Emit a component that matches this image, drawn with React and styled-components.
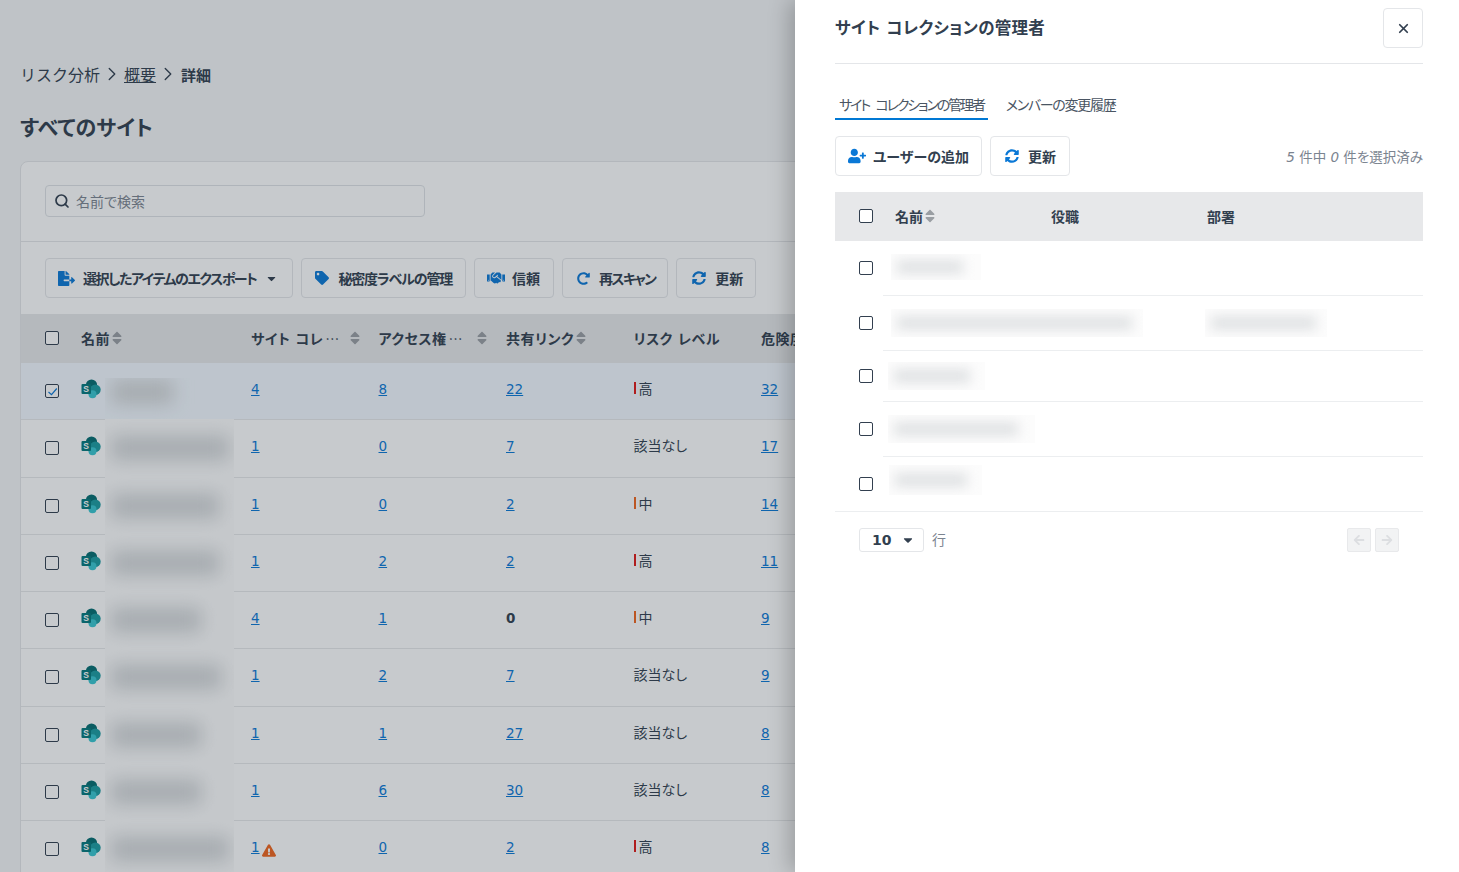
import React from "react";
import styled, { createGlobalStyle } from "styled-components";
import {
  FaArrowLeft, FaArrowRight, FaCaretDown, FaExclamationTriangle, FaFileExport, FaHandshake,
  FaRedoAlt, FaSort, FaSyncAlt, FaTag, FaUserPlus,
} from "react-icons/fa";
import { ChevronRight, Search, X } from "lucide-react";

const Global = createGlobalStyle`
  html, body { margin: 0; padding: 0; height: 100%; overflow: hidden; }
  body {
    font-family: "DejaVu Sans", "Noto Sans CJK JP", sans-serif;
    font-size: 14px;
    color: #323f4f;
    font-feature-settings: "palt";
  }
  * { box-sizing: border-box; }
`;

const Screen = styled.div`
  position: relative;
  height: 872px;
  overflow: hidden;
  background: #f5f6f7;
`;
const Page = styled.main`
  display: flex;
  flex-direction: column;
  padding: 63px 0 0 20px;
`;
const Crumbs = styled.nav`
  display: flex;
  align-items: center;
  height: 22px;
  font-size: 16px;
  gap: 1px;
  font-feature-settings: normal;
`;
const CrumbLink = styled.a`
  text-decoration: underline;
  color: inherit;
`;
const CrumbNow = styled.b`
  font-size: 15px;
  font-weight: 700;
  margin-left: 1px;
`;
const Title = styled.h1`
  margin: 28px 0 0;
  font-size: 21px;
  line-height: 30px;
  font-weight: 700;
`;
const Card = styled.section`
  margin-top: 18px;
  background: #fff;
  border: 1px solid #e4e6e9;
  border-radius: 8px 0 0 0;
`;
const SearchBar = styled.div`
  padding: 23px 24px 24px;
  border-bottom: 1px solid #e4e6e9;
`;
const SearchBox = styled.div`
  width: 380px;
  height: 32px;
  display: flex;
  align-items: center;
  gap: 6px;
  padding: 0 8px;
  border: 1px solid #dfe2e6;
  border-radius: 4px;
  color: #7d8590;
  svg { color: #323f4f; }
`;
const Toolbar = styled.div`
  display: flex;
  gap: 8px;
  padding: 16px 24px;
`;
const Button = styled.button`
  height: 40px;
  padding: 0 ${(p) => p.$pr || 13}px 0 ${(p) => p.$pl || 13}px;
  display: inline-flex;
  align-items: center;
  gap: ${(p) => p.$gap || 8}px;
  background: #fff;
  border: 1px solid #e4e6e9;
  border-radius: 4px;
  color: #323f4f;
  font: inherit;
  font-weight: 700;
  font-size: 14px;
  font-feature-settings: "palt";
  white-space: nowrap;
  svg { color: #0a78d6; flex: none; }
`;
const Squeezed = styled.span`
  letter-spacing: ${(p) => p.$ls}px;
`;
const Caret = styled(FaCaretDown)`
  && { color: #323f4f; margin-left: 1px; }
`;
const HeadRow = styled.div`
  display: grid;
  grid-template-columns: 60px 170px repeat(6, 127.5px);
  height: 49px;
  padding-bottom: 2px;
  align-items: center;
  background: #e7e8ea;
  font-weight: 700;
  letter-spacing: 0.5px;
`;
const Row = styled.div`
  display: grid;
  grid-template-columns: 60px 170px repeat(6, 127.5px);
  height: 57.25px;
  align-items: center;
  border-bottom: 1px solid #e7e8ea;
  background: ${(p) => (p.$selected ? "#f3f9ff" : "#fff")};
`;
const CheckCell = styled.div`
  display: flex;
  padding-left: 24px;
`;
const Box = styled.span`
  width: 14px;
  height: 14px;
  flex: none;
  display: flex;
  align-items: center;
  justify-content: center;
  border: 1.5px solid #323f4f;
  border-radius: 2px;
  background: #fff;
`;
const HeadLabel = styled.div`
  display: flex;
  align-items: center;
  gap: 2px;
  white-space: nowrap;
`;
const Dots = styled.span`
  font-family: "Noto Sans CJK JP", sans-serif;
  font-weight: 400;
`;
const SortIcon = styled(FaSort)`
  color: #9a9ea3;
  width: 10px;
  height: 16px;
  flex: none;
  margin-left: ${(p) => p.$ml || 0}px;
`;
const NameCell = styled.div`
  position: relative;
  align-self: stretch;
  display: flex;
  align-items: center;
  padding-bottom: 4px;
`;
const Smudge = styled.div`
  position: absolute;
  top: ${(p) => (p.$first ? 15 : -1)}px;
  bottom: -1px;
  left: 24px;
  width: 129px;
  overflow: hidden;
  display: flex;
  align-items: center;
  padding-bottom: ${(p) => (p.$first ? 14 : 0)}px;
  background: ${(p) => (p.$first ? "transparent" : "#fdfdfd")};
`;
const SmudgeBar = styled.div`
  width: ${(p) => p.$w}px;
  height: 24px;
  margin-left: 6px;
  background: #d3d6d8;
  filter: blur(9px);
`;
const Cell = styled.div`
  display: flex;
  align-items: center;
  gap: 2px;
  padding-bottom: 4px;
`;
const Link = styled.a`
  color: #0a78d6;
  font-size: 13.5px;
  text-decoration: underline;
`;
const Plain = styled.b`
  font-weight: 700;
  font-size: 13.5px;
`;
const Risk = styled.span`
  display: inline-block;
  width: 2px;
  height: 12px;
  margin-right: 3px;
  background: ${(p) => p.$c};
`;
const RiskText = styled.span`
  font-size: 14px;
  margin-bottom: 2px;
`;
const Warn = styled(FaExclamationTriangle)`
  color: #f0651c;
  width: 14px;
  height: 13px;
  transform: translateY(3px);
`;
const Backdrop = styled.div`
  position: absolute;
  inset: 0;
  background: rgba(33, 43, 54, 0.25);
`;
const Drawer = styled.aside`
  position: absolute;
  top: 0;
  right: 0;
  bottom: 0;
  width: 664px;
  padding: 8px 36px 0 40px;
  background: #fff;
  box-shadow: -6px 0 20px rgba(0, 0, 0, 0.22);
`;
const DrawerHead = styled.header`
  display: flex;
  justify-content: space-between;
  height: 56px;
  border-bottom: 1px solid #e4e6e9;
`;
const DrawerTitle = styled.h2`
  margin: 9px 0 0;
  font-size: 16.5px;
  line-height: 24px;
  font-weight: 700;
  letter-spacing: 0.3px;
`;
const Close = styled.button`
  width: 40px;
  height: 40px;
  display: flex;
  align-items: center;
  justify-content: center;
  background: #fff;
  border: 1px solid #e4e6e9;
  border-radius: 4px;
  color: #323f4f;
`;
const Tabs = styled.div`
  display: flex;
  gap: 14px;
  margin-top: 30px;
`;
const Tab = styled.div`
  height: 26px;
  padding: 0 4px;
  font-size: 14px;
  line-height: 22px;
  letter-spacing: ${(p) => p.$ls}px;
  word-spacing: 4px;
  white-space: nowrap;
  color: #4a5563;
  border-bottom: 2px solid ${(p) => (p.$on ? "#0078d4" : "transparent")};
`;
const Actions = styled.div`
  display: flex;
  align-items: center;
  gap: 8px;
  margin-top: 16px;
`;
const Count = styled.div`
  margin-left: auto;
  font-size: 13.5px;
  color: #7b8490;
  em { font-style: italic; }
`;
const DrawerHeadRow = styled.div`
  display: grid;
  grid-template-columns: 60px 156px 156px 1fr;
  align-items: center;
  height: 48.5px;
  margin-top: 16px;
  background: #e7e8ea;
  font-weight: 700;
  border-bottom: 1px solid #e7e8ea;
`;
const DrawerRow = styled.div`
  position: relative;
  display: flex;
  align-items: center;
  height: ${(p) => p.$h}px;
  padding-left: 24px;
  &::after {
    content: "";
    position: absolute;
    left: ${(p) => (p.$last ? 0 : 48)}px;
    right: 0;
    bottom: 0;
    border-bottom: 1px solid #eceef0;
  }
`;
const Patches = styled.div`
  display: flex;
  margin-left: ${(p) => p.$ml}px;
  margin-bottom: ${(p) => p.$mb || 0}px;
  gap: ${(p) => p.$gap || 0}px;
`;
const Patch = styled.div`
  width: ${(p) => p.$w}px;
  height: ${(p) => p.$h || 28}px;
  overflow: hidden;
  display: flex;
  align-items: center;
  background: #fcfcfc;
`;
const PatchBar = styled.div`
  width: ${(p) => p.$w}px;
  height: 14px;
  margin-left: 6px;
  background: #e0e2e4;
  filter: blur(6px);
`;
const Pager = styled.footer`
  display: flex;
  align-items: center;
  padding: 16px 24px 0;
`;
const PageSize = styled.div`
  width: 65px;
  height: 24px;
  display: flex;
  align-items: center;
  justify-content: space-between;
  padding: 0 8px 0 12px;
  border: 1px solid #e4e6e9;
  border-radius: 3px;
  font-weight: 700;
  font-size: 14px;
`;
const Rows = styled.span`
  margin: 0 0 2px 8px;
  color: #7b8490;
`;
const PageArrows = styled.div`
  margin-left: auto;
  display: flex;
  gap: 4px;
`;
const PageArrow = styled.span`
  width: 24px;
  height: 24px;
  display: flex;
  align-items: center;
  justify-content: center;
  background: #f2f3f4;
  border: 1px solid #e8e9eb;
  border-radius: 2px;
  color: #dcdee1;
`;

const SharePoint = () => (
  <svg width="20" height="20" viewBox="0 0 20 20" aria-hidden="true">
    <circle cx="10.5" cy="6" r="5.6" fill="#036c70" />
    <circle cx="14.3" cy="10.8" r="5.4" fill="#1a9ba1" />
    <circle cx="11.5" cy="15.2" r="4" fill="#37c6d0" />
    <rect x="0.5" y="5" width="9.5" height="10" rx="1" fill="#03787c" />
    <text x="5.2" y="13" fontSize="8.5" fontWeight="700" textAnchor="middle" fill="#fff" fontFamily="Liberation Sans, sans-serif">S</text>
  </svg>
);

const Check = ({ on }) => (
  <Box>
    {on && (
      <svg width="11" height="11" viewBox="0 0 11 11" aria-hidden="true">
        <path d="M1.5 6l3 2.6L9.8 2.5" fill="none" stroke="#0a78d6" strokeWidth="1.2" />
      </svg>
    )}
  </Box>
);

const RED = "#e01916";
const ORANGE = "#f0651c";
const sites = [
  { bar: 62, a: 4, b: 8, c: 22, risk: "高", rc: RED, d: 32, sel: true },
  { bar: 118, a: 1, b: 0, c: 7, risk: "該当なし", d: 17 },
  { bar: 108, a: 1, b: 0, c: 2, risk: "中", rc: ORANGE, d: 14 },
  { bar: 108, a: 1, b: 2, c: 2, risk: "高", rc: RED, d: 11 },
  { bar: 90, a: 4, b: 1, c: 0, risk: "中", rc: ORANGE, d: 9, plain: true },
  { bar: 110, a: 1, b: 2, c: 7, risk: "該当なし", d: 9 },
  { bar: 90, a: 1, b: 1, c: 27, risk: "該当なし", d: 8 },
  { bar: 90, a: 1, b: 6, c: 30, risk: "該当なし", d: 8 },
  { bar: 118, a: 1, b: 0, c: 2, risk: "高", rc: RED, d: 8, warn: true },
];

const admins = [
  { h: 55, ml: 18, mb: 3, ph: 26, patches: [{ w: 90, bar: 66 }] },
  { h: 55, ml: 18, gap: 62, patches: [{ w: 252, bar: 235 }, { w: 122, bar: 105 }] },
  { h: 51, ml: 15, patches: [{ w: 97, bar: 76 }] },
  { h: 55, ml: 15, patches: [{ w: 147, bar: 124 }] },
  { h: 55, ml: 16, mb: 8, ph: 30, last: true, patches: [{ w: 93, bar: 72 }] },
];

export default function App() {
  return (
    <Screen>
      <Global />
      <Page>
        <Crumbs>
          リスク分析
          <ChevronRight size={22} strokeWidth={1.5} />
          <CrumbLink>概要</CrumbLink>
          <ChevronRight size={22} strokeWidth={1.5} />
          <CrumbNow>詳細</CrumbNow>
        </Crumbs>
        <Title>すべてのサイト</Title>
        <Card>
          <SearchBar>
            <SearchBox>
              <Search size={16} strokeWidth={2.6} />
              名前で検索
            </SearchBox>
          </SearchBar>
          <Toolbar>
            <Button $pl={12} $pr={14} $gap={8}>
              <FaFileExport size={17} />
              <Squeezed $ls={-1.45}>選択したアイテムのエクスポート</Squeezed>
              <Caret size={13} />
            </Button>
            <Button $pl={13} $pr={13} $gap={9}>
              <FaTag size={14} />
              <Squeezed $ls={-1.15}>秘密度ラベルの管理</Squeezed>
            </Button>
            <Button $pl={12} $pr={13} $gap={7}>
              <FaHandshake size={18} />
              信頼
            </Button>
            <Button $pl={14} $pr={12} $gap={9}>
              <FaRedoAlt size={13} />
              <Squeezed $ls={-1.7}>再スキャン</Squeezed>
            </Button>
            <Button $pl={15} $pr={12} $gap={9}>
              <FaSyncAlt size={14} />
              更新
            </Button>
          </Toolbar>
          <HeadRow>
            <CheckCell><Check /></CheckCell>
            <HeadLabel>名前<SortIcon /></HeadLabel>
            <HeadLabel>サイト コレ<Dots>…</Dots><SortIcon $ml={8} /></HeadLabel>
            <HeadLabel>アクセス権<Dots>…</Dots><SortIcon $ml={12} /></HeadLabel>
            <HeadLabel>共有リンク<SortIcon /></HeadLabel>
            <HeadLabel>リスク レベル</HeadLabel>
            <HeadLabel>危険度スコア</HeadLabel>
          </HeadRow>
          {sites.map((s, i) => (
            <Row key={i} $selected={s.sel}>
              <CheckCell><Check on={s.sel} /></CheckCell>
              <NameCell>
                <SharePoint />
                <Smudge $first={s.sel}><SmudgeBar $w={s.bar} /></Smudge>
              </NameCell>
              <Cell><Link>{s.a}</Link>{s.warn && <Warn />}</Cell>
              <Cell><Link>{s.b}</Link></Cell>
              <Cell>{s.plain ? <Plain>{s.c}</Plain> : <Link>{s.c}</Link>}</Cell>
              <Cell><RiskText>{s.rc && <Risk $c={s.rc} />}{s.risk}</RiskText></Cell>
              <Cell><Link>{s.d}</Link></Cell>
            </Row>
          ))}
        </Card>
      </Page>
      <Backdrop />
      <Drawer>
        <DrawerHead>
          <DrawerTitle>サイト コレクションの管理者</DrawerTitle>
          <Close><X size={15} strokeWidth={2.8} /></Close>
        </DrawerHead>
        <Tabs>
          <Tab $on $ls={-2.1}>サイト コレクションの管理者</Tab>
          <Tab $ls={-1.3}>メンバーの変更履歴</Tab>
        </Tabs>
        <Actions>
          <Button $pl={12} $pr={12} $gap={7}>
            <FaUserPlus size={18} />
            ユーザーの追加
          </Button>
          <Button $pl={14} $pr={13} $gap={9}>
            <FaSyncAlt size={14} />
            更新
          </Button>
          <Count><em>5</em> 件中 <em>0</em> 件を選択済み</Count>
        </Actions>
        <DrawerHeadRow>
          <CheckCell><Check /></CheckCell>
          <HeadLabel>名前<SortIcon /></HeadLabel>
          <HeadLabel>役職</HeadLabel>
          <HeadLabel>部署</HeadLabel>
        </DrawerHeadRow>
        {admins.map((a, i) => (
          <DrawerRow key={i} $h={a.h} $last={a.last}>
            <Check />
            <Patches $ml={a.ml} $gap={a.gap} $mb={a.mb}>
              {a.patches.map((p, j) => (
                <Patch key={j} $w={p.w} $h={a.ph}><PatchBar $w={p.bar} /></Patch>
              ))}
            </Patches>
          </DrawerRow>
        ))}
        <Pager>
          <PageSize>10<FaCaretDown size={14} /></PageSize>
          <Rows>行</Rows>
          <PageArrows>
            <PageArrow><FaArrowLeft size={12} /></PageArrow>
            <PageArrow><FaArrowRight size={12} /></PageArrow>
          </PageArrows>
        </Pager>
      </Drawer>
    </Screen>
  );
}
